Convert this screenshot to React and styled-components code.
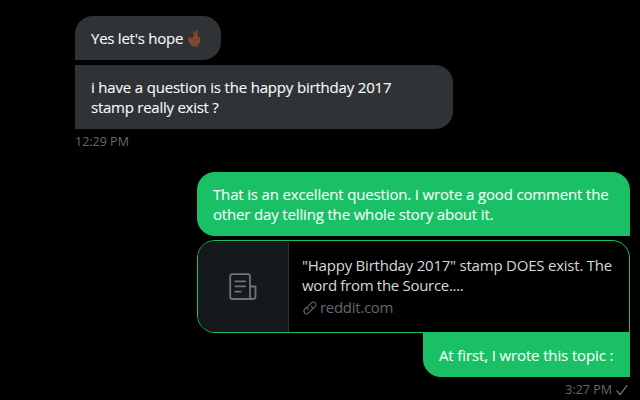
import React from "react";
import styled, { createGlobalStyle } from "styled-components";

const GlobalStyle = createGlobalStyle`
  * { box-sizing: border-box; }
  body { margin: 0; background: #000; }
`;

const Conversation = styled.main`
  width: 640px;
  height: 400px;
  overflow: hidden;
  background: #000;
  padding: 16px 10px 0 75px;
  display: flex;
  flex-direction: column;
  font-family: "Open Sans", "Noto Sans", sans-serif;
`;

const Group = styled.section`
  display: flex;
  flex-direction: column;
  align-items: ${(p) => (p.$sent ? "flex-end" : "flex-start")};
  margin-bottom: 22px;
`;

const Bubble = styled.div`
  width: ${(p) => p.$width}px;
  padding: 12px 16px;
  margin-bottom: ${(p) => p.$gap || 0}px;
  border-radius: ${(p) => p.$radius};
  background: ${(p) => (p.$sent ? "#19c065" : "#2f3336")};
  color: ${(p) => (p.$sent ? "#f4fdf7" : "#f7f8f8")};
  -webkit-text-stroke: 0.12px currentColor;
`;

const Line = styled.div`
  display: flex;
  align-items: center;
  height: 20px;
  white-space: pre;
  font-size: 15px;
  line-height: 20px;
  letter-spacing: ${(p) => p.$spacing || 0}px;
`;

const Emoji = styled.svg`
  width: 15px;
  height: 18px;
  margin: 0 0 0 4px;
`;

const Time = styled.div`
  display: flex;
  align-items: center;
  height: 16px;
  margin-top: 5px;
  white-space: pre;
  font-size: 12.5px;
  line-height: 16px;
  color: #64696e;
`;

const Check = styled.svg`
  width: 12px;
  height: 12px;
  margin: 0 2px 1px 4px;
`;

const LinkCard = styled.article`
  width: 433px;
  height: 93px;
  display: flex;
  border: 1px solid #19c065;
  border-radius: 18px 18px 0 18px;
  overflow: hidden;
`;

const Thumbnail = styled.div`
  width: 91px;
  margin-top: 1px;
  display: flex;
  align-items: center;
  justify-content: center;
  background: #15181c;
  border-right: 1px solid #2f3336;
`;

const CardBody = styled.div`
  flex: 1;
  padding: 14px 0 0 13px;
  color: #d6d8d9;
`;

const Domain = styled.div`
  display: flex;
  align-items: center;
  height: 23px;
  margin-top: 1px;
  font-size: 15px;
  line-height: 23px;
  color: #64696e;
  letter-spacing: -0.3px;
`;

const LinkIcon = styled.svg`
  width: 16px;
  height: 16px;
  margin-right: 2px;
`;

function CrossedFingers() {
  return (
    <Emoji viewBox="0 0 15 18" aria-label="Crossed fingers">
      <path d="M5.7 8.8 7 6.2 5.9 3.1C5.6 2.1 6.8 1.6 7.4 2.5L8.6 4.2 9.3 1.3C9.6.1 11.2.4 11 1.7L10.3 5.5 11 8.3C13.1 8.4 13.6 9.7 13.2 11.7 12.8 13.8 12 14.6 11.2 15.3V17.5H4.6L4 15.4C1.9 13.8 1 11.8 1.1 9.7 1.2 8.2 3.1 7.7 3.6 8.9 4.1 8 5.4 8 5.7 8.8Z" fill="#85492f" />
      <path d="M8.6 4.2 7.8 7.8M3.6 9.1v2.4M5.8 9v2.3l3.8-.7M11 8.5v2.7M5.8 11.8 8.5 12l-1.6 1.8M4.6 15.5h6.2" fill="none" stroke="#643923" strokeWidth=".6" />
    </Emoji>
  );
}

export default function App() {
  return (
    <>
      <GlobalStyle />
      <Conversation>
        <Group>
          <Bubble $width={146} $gap={5} $radius="18px 18px 18px 0">
            <Line $spacing={-0.25}>Yes let's hope<CrossedFingers /></Line>
          </Bubble>
          <Bubble $width={378} $radius="0 18px 18px 0">
            <Line $spacing={-0.18}>i have a question is the happy birthday 2017</Line>
            <Line $spacing={-0.25}>stamp really exist ?</Line>
          </Bubble>
          <Time>12:29 PM</Time>
        </Group>
        <Group $sent>
          <Bubble $sent $width={433} $gap={4} $radius="18px 18px 0 18px">
            <Line $spacing={-0.16}>That is an excellent question. I wrote a good comment the</Line>
            <Line $spacing={-0.16}>other day telling the whole story about it.</Line>
          </Bubble>
          <LinkCard>
            <Thumbnail>
              <svg width="28" height="28" viewBox="0 0 28 28" fill="none" stroke="#69767d" strokeWidth="1.8" strokeLinecap="round" strokeLinejoin="round">
                <path d="M23.7 26H3.5Q1.2 26 1.2 23.7V3.5Q1.2 1.2 3.5 1.2H18.7Q21 1.2 21 3.5V23.7Q21 26 23.7 26 26.5 26 26.5 23.7V13.5H21M6.2 8.3h10M6.2 13.3h10M6.2 18.6h5.5" />
              </svg>
            </Thumbnail>
            <CardBody>
              <Line $spacing={-0.22}>"Happy Birthday 2017" stamp DOES exist. The</Line>
              <Line $spacing={-0.3}>word from the Source....</Line>
              <Domain>
                <LinkIcon viewBox="0 0 16 16" fill="none" stroke="#64696e" strokeWidth="1.1" strokeLinecap="round">
                  <path d="M6.3 9.7C4.8 8.4 5.5 7 6.6 5.9L9.3 3.1C12.1.4 15.8 4 13 6.8L11.2 8.6M9.5 6.3C11.1 7.6 10.4 9.1 9.3 10.2L6.6 12.9C3.8 15.6.2 12 2.9 9.2L4.6 7.5" />
                </LinkIcon>
                reddit.com
              </Domain>
            </CardBody>
          </LinkCard>
          <Bubble $sent $width={207} $radius="0 0 0 18px">
            <Line $spacing={-0.13}>At first, I wrote this topic :</Line>
          </Bubble>
          <Time>
            3:27 PM
            <Check viewBox="0 0 12 12" fill="none" stroke="#777c80" strokeWidth="1.2" strokeLinecap="round" strokeLinejoin="round">
              <path d="m1 7 3 3.7 7-9" />
            </Check>
          </Time>
        </Group>
      </Conversation>
    </>
  );
}
